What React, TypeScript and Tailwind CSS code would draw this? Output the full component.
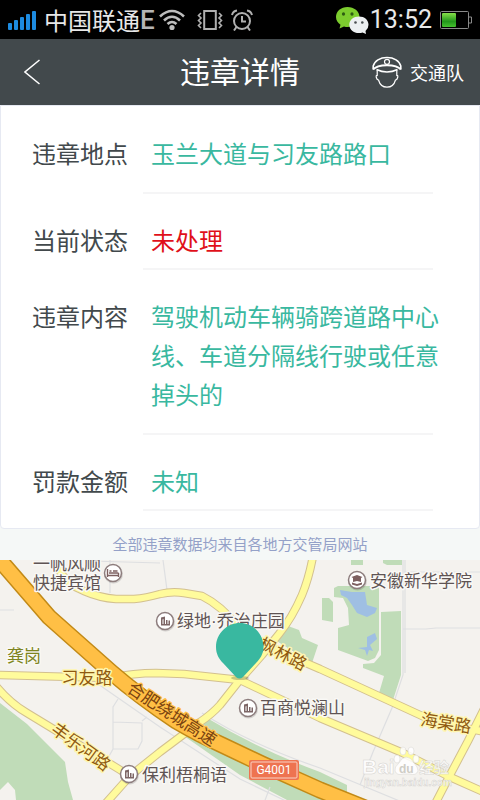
import React from 'react';

interface DetailRow {
  label: string;
  value: string;
  alert?: boolean;
  roomy?: boolean;
}

const rows: DetailRow[] = [
  { label: '违章地点', value: '玉兰大道与习友路路口', roomy: true },
  { label: '当前状态', value: '未处理', alert: true },
  { label: '违章内容', value: '驾驶机动车辆骑跨道路中心线、车道分隔线行驶或任意掉头的', roomy: true },
  { label: '罚款金额', value: '未知' },
];

// Road centre lines, drawn first as a casing and then as a fill
const roads = [
  'M58 8Q66 24 84 31Q100 38 116 39H134Q146 38 160 34Q172 31 184 33L202 36Q222 46 237 66L240 84',
  'M313 -4Q309 18 302 35Q292 58 279 74L262 95L239 121L220 145Q212 154 200 162L160 192L130 216L106 243',
  'M-4 115L110 118Q134 113 156 113L184 114L240 120L320 158L403 193L450 217L486 233',
  'M262 84L320 109L420 155Q436 163 486 172',
  'M486 145L468 181L450 215L435 244',
  'M-4 126Q10 143 27 153L55 170L130 216',
];

const lanes = [
  'M0 50H14M110 0V33M90 1L160 3M163 0L167 30',
  'M403 0V115L392 148L373 192L360 225M405 0V113M404 12H480M403 69H426L436 68H480',
  'M98 124L160 167L240 219L290 243M118 139L113 147V189L108 198M113 162L142 163V181L138 189H113M142 161L147 157',
  'M202 153Q250 184 320 208L402 242M270 227L264 243',
];

const highway = 'M-8 -10L4 5L49 57L111 112Q140 137 176 161Q200 175 222 185L262 204L320 230L375 252';

function SignalIcon() {
  return (
    <svg viewBox="0 0 29 20" className="h-5 w-[29px] shrink-0" fill="#1d8be0" aria-hidden="true">
      <rect x="0" y="13" width="4" height="7" rx="1" />
      <rect x="6" y="10" width="4" height="10" rx="1" />
      <rect x="12" y="7" width="4" height="13" rx="1" />
      <rect x="18" y="4" width="4" height="16" rx="1" />
      <rect x="24" y="1" width="4" height="19" rx="1" />
    </svg>
  );
}

function WifiIcon() {
  return (
    <svg viewBox="0 0 26 22" className="h-[22px] w-[26px] shrink-0" fill="none" stroke="#bdbdbd" strokeWidth="2.6" aria-hidden="true">
      <path d="M1 7.5Q13 -3.5 25 7.5" />
      <path d="M5 11.5Q13 4 21 11.5" />
      <path d="M8.5 15Q13 11 17.5 15" />
      <circle cx="13" cy="18.5" r="2.6" fill="#bdbdbd" stroke="none" />
    </svg>
  );
}

function VibrateIcon() {
  return (
    <svg viewBox="0 0 26 20" className="h-5 w-[26px] shrink-0" fill="none" stroke="#b0b0b0" strokeWidth="1.6" aria-hidden="true">
      <rect x="7.2" y="1" width="11.6" height="18" strokeWidth="2" />
      <path d="M4 3L1.5 5.5L4 8L1.5 10.5L4 13L1.5 15.5L4 18" />
      <path d="M22 3L24.5 5.5L22 8L24.5 10.5L22 13L24.5 15.5L22 18" />
    </svg>
  );
}

function AlarmIcon() {
  return (
    <svg viewBox="0 0 22 22" className="h-[22px] w-[22px] shrink-0" fill="none" stroke="#b0b0b0" strokeWidth="2" aria-hidden="true">
      <circle cx="11" cy="12" r="8" />
      <path d="M11 7V12.5H15" />
      <path d="M1 6Q2 2 6 1.5M16 1.5Q20 2 21 6" />
      <path d="M5.5 18L3 21.5M16.5 18L19 21.5" />
    </svg>
  );
}

function ChatIcon() {
  return (
    <svg viewBox="0 0 34 28" className="h-7 w-[34px] shrink-0" aria-hidden="true">
      <path d="M12.5 1C6 1 1 5.3 1 11C1 14.5 3 17 5.5 18.8L4.5 22.5L9 20.5Q11 21 12.5 21C19 21 24.5 17 24.5 11C24.5 5.3 19 1 12.5 1Z" fill="#7ccc2e" />
      <ellipse cx="8.5" cy="8" rx="1.6" ry="1.7" fill="#2d5c12" />
      <ellipse cx="17" cy="8" rx="1.6" ry="1.7" fill="#2d5c12" />
      <path d="M24 10.5C18.5 10.5 14.3 14 14.3 18.7C14.3 23.5 18.5 27 24 27Q26 27 27.5 26.5L31 28L30.5 25Q33.5 22.5 33.5 18.7C33.5 14 29.5 10.5 24 10.5Z" fill="#eceff1" />
      <circle cx="20.5" cy="16.5" r="1.3" fill="#4a4f52" />
      <circle cx="27.3" cy="16.5" r="1.3" fill="#4a4f52" />
    </svg>
  );
}

function BatteryIcon() {
  return (
    <svg viewBox="0 0 32 18" className="h-[18px] w-8 shrink-0" aria-hidden="true">
      <defs>
        <linearGradient id="charge" x1="0" y1="0" x2="0" y2="1">
          <stop offset="0" stopColor="#86e04a" />
          <stop offset="0.6" stopColor="#22961b" />
          <stop offset="1" stopColor="#45c22e" />
        </linearGradient>
      </defs>
      <rect x="0.5" y="0.5" width="28" height="17" rx="1" fill="none" stroke="#8a8a8a" />
      <rect x="2" y="2" width="14" height="14" rx="1" fill="url(#charge)" />
      <path d="M29 6H31.5V12H29" fill="none" stroke="#8a8a8a" />
    </svg>
  );
}

function OfficerIcon() {
  return (
    <svg viewBox="0 0 30 32" className="h-8 w-[30px] shrink-0" fill="none" stroke="#ffffff" strokeWidth="1.2" aria-hidden="true">
      <path d="M1.2 13.5V10C2.5 5 8 1.5 15 1.5S27.500 5 28.800 10V13.5" strokeWidth="1.6" />
      <path d="M1.2 13.5Q4.500 9.200 15 9.200T28.800 13.5" strokeWidth="2" />
      <path d="M4.500 13.500Q15 18.500 25.500 13.500" strokeWidth="1.4" />
      <circle cx="15" cy="5.8" r="2.5" />
      <path d="M5.2 14V19.500Q3.800 19 4.300 21.5Q5 24 6.500 24Q8.5 31.200 15 31.200T23.500 24Q25 24 25.700 21.5Q26.200 19 24.800 19.500V14" />
    </svg>
  );
}

interface PoiProps {
  x: number;
  y: number;
  kind?: 'building' | 'hotel' | 'school';
}

function Poi({ x, y, kind = 'building' }: PoiProps) {
  return (
    <g transform={`translate(${x} ${y})`}>
      <circle cx="0.5" cy="1" r="9.5" fill="#00000022" />
      <circle r="8.5" fill="#ffffff" stroke="#8d7d7d" strokeWidth="1.5" />
      {kind === 'building' && (
        <path d="M-4 4V-3.5L0 -4.5V3H1V-1H2.5V3H3.5V-0.5H5V4.5H-4ZM-2.5 3H-1.5V-2L-2.5 -1.5Z" fill="#7d6666" />
      )}
      {kind === 'hotel' && (
        <path d="M-5.5 -4V4M-5.5 2.5H5.5M5.5 4V0M-4 0H5.5M-3.5 -2H-1.5M0 -2H4.5" fill="none" stroke="#7d6060" strokeWidth="1.4" />
      )}
      {kind === 'school' && (
        <path d="M0 -5L5.5 -3L4 -2V2L0 1L-4 2V-2L-5.5 -3ZM-5 2.500L0 4L5 2.500V4.500L0 6L-5 4.500Z" fill="#7d6060" />
      )}
    </g>
  );
}

function LocationMap() {
  return (
    <svg
      viewBox="0 0 480 240"
      preserveAspectRatio="xMidYMid slice"
      role="img"
      aria-label="违章地点地图"
      className="min-h-60 w-full flex-1 bg-[#f4f2ee] font-['Liberation_Sans','Noto_Sans_CJK_SC',sans-serif] text-[17px]"
    >
      {/* Parks */}
      <g fill="#c0dcb8">
        <path d="M0 143L27 164L65 202L68 222L73 240H16L15 230L8 222L0 230Z" />
        <path d="M184 176L207 158Q260 190 320 212L347 225V240H287L240 215Z" />
        <path d="M275 80L288 66L299 70L302 78L318 85L312 103Z" />
        <path d="M351 0H363V5H351ZM383 0H402V5H387L383 3Z" />
        <path d="M322 38H329L333 42V62L322 60Z" />
        <path d="M334 28L338 26H379V90L375 98L368 101L338 90V68L349 65L348 48L343 38L334 37Z" />
        <path d="M381 52L401 51V115L393 140L379 133L384 116L363 108V104L374 103L381 95Z" />
      </g>
      <g fill="#9fbfe3">
        <path d="M340 30L352 32H365L367 45L377 48L375 53L367 57L357 53L352 45L347 38L341 35Z" />
        <path d="M367 77L375 73L377 79L370 85L373 91L369 90L367 96L365 90L358 88L367 87Z" />
      </g>

      <g fill="none" stroke="#dedfe1" strokeWidth="1.2">
        {lanes.map((d) => <path key={d} d={d} />)}
      </g>

      {/* Roads */}
      <g fill="none" strokeLinejoin="round">
        <g stroke="#d3c08f" strokeWidth="8.5">
          {roads.map((d) => <path key={d} d={d} />)}
        </g>
        <g stroke="#fffb9c" strokeWidth="6.5">
          {roads.map((d) => <path key={d} d={d} />)}
        </g>
        <path d={highway} stroke="#c28a17" strokeWidth="17" />
        <path d={highway} stroke="#ffbf45" strokeWidth="14" />
      </g>

      {/* Road names */}
      <g fill="#8f5a10" stroke="#fff6b0" strokeWidth="3" strokeLinejoin="round" paintOrder="stroke" textAnchor="middle">
        <text x="87" y="124">习友路</text>
        <text transform="translate(283 94) rotate(27)" y="6">枫林路</text>
        <text transform="translate(446 163) rotate(9)" y="6">海棠路</text>
        <text transform="translate(81 187) rotate(36)" y="6">丰乐河路</text>
        <text transform="translate(172 154) rotate(33)" y="6" fill="#7a4310" stroke="#ffbf45">合肥绕城高速</text>
      </g>

      <g stroke="#f9f8f5" strokeWidth="3" strokeLinejoin="round" paintOrder="stroke" fill="#5f5454">
        <text x="7" y="102" fill="#7d8420">龚岗</text>
        <text x="33" y="10">一帆风顺</text>
        <text x="33" y="29">快捷宾馆</text>
        <text x="177" y="67">绿地·乔治庄园</text>
        <text x="370" y="27">安徽新华学院</text>
        <text x="260" y="154">百商悦澜山</text>
        <text x="142" y="221">保利梧桐语</text>
      </g>
      <Poi x={113} y={13} kind="hotel" />
      <Poi x={165} y={61} />
      <Poi x={357} y={20} kind="school" />
      <Poi x={248} y={148} />
      <Poi x={129} y={214} />

      <rect x="249" y="200" width="50" height="20" rx="2" fill="#ee7350" />
      <rect x="251" y="202" width="46" height="16" rx="1" fill="none" stroke="#f9d2c4" />
      <text x="274" y="214" textAnchor="middle" fill="#ffffff" className="font-['Roboto',sans-serif] text-[12px]">G4001</text>

      {/* Violation marker */}
      <ellipse cx="240" cy="118" rx="9" ry="2" fill="#00000033" />
      <path d="M240 63C227 63 216 73.5 216 87C216 94 219 99 223 103L236 117Q239.5 120 243 117L256 103C260 99 263.5 94 263.5 87C263.5 73.5 253 63 240 63Z" fill="#39b8a0" />

      {/* Watermark */}
      <g fill="#ffffff" fillOpacity="0.85" stroke="#d5d3cf" strokeWidth="0.5" className="font-['Liberation_Sans','Noto_Sans_CJK_SC',sans-serif] font-bold">
        <text x="362" y="214" className="text-[21px]">Bai</text>
        <ellipse cx="397" cy="199" rx="3" ry="4" />
        <ellipse cx="403" cy="191" rx="3" ry="4" />
        <ellipse cx="411" cy="191" rx="3" ry="4" />
        <ellipse cx="416" cy="199" rx="3" ry="4" />
        <path d="M406 197Q401 198 399 203Q394 207 395 211Q397 216 403 214H410Q416 216 418 211Q418 207 414 203Q411 197 406 197Z" />
        <text x="419" y="213" className="text-[15px]">经验</text>
        <text x="364" y="226" className="text-[10px]">jingyan.baidu.com</text>
      </g>
      <text x="399" y="213" fill="#cfcdc6" className="text-[12px] font-bold">du</text>
    </svg>
  );
}

export default function App() {
  return (
    <div className="flex min-h-screen flex-col bg-[#f5f8f7] font-['Noto_Sans_CJK_SC',sans-serif]">
      {/* Status bar */}
      <div className="flex h-[39px] items-center justify-between bg-black px-2 text-[#e8e8e8]">
        <div className="flex items-center">
          <SignalIcon />
          <span className="ml-[7px] text-2xl leading-9">中国联通</span>
          <span className="mr-1 font-['Roboto',sans-serif] text-[26px] font-medium leading-9 text-[#b5b5b5]">E</span>
          <WifiIcon />
          <span className="ml-3 flex items-center gap-2">
            <VibrateIcon />
            <AlarmIcon />
          </span>
        </div>
        <div className="flex items-center">
          <ChatIcon />
          <span className="mr-2 ml-px font-['Roboto',sans-serif] text-[25px] leading-9">13:52</span>
          <BatteryIcon />
        </div>
      </div>

      {/* Title bar */}
      <header className="grid h-[66px] grid-cols-[1fr_auto_1fr] items-center bg-[#42494c] px-4 text-white">
        <button type="button" aria-label="返回" className="w-8 p-2">
          <svg viewBox="0 0 16 26" className="h-[26px] w-4" fill="none" stroke="currentColor" strokeWidth="1.5">
            <path d="M15.5 1L1 13L15.5 25" />
          </svg>
        </button>
        <h1 className="pb-1 text-3xl leading-[44px]">违章详情</h1>
        <button type="button" className="flex items-center gap-2 justify-self-end text-lg">
          <OfficerIcon />
          交通队
        </button>
      </header>

      {/* Violation details */}
      <dl className="rounded-b-sm border border-[#e6e9f2] bg-white pt-px pb-[17px] text-2xl leading-[39px]">
        {rows.map((row) => (
          <div key={row.label} className="flex pt-[26px]">
            <dt className="w-[142px] shrink-0 pl-[31px] text-[#42494c]">{row.label}</dt>
            <dd className="flex-1">
              <p className={`pr-8 pl-2 ${row.roomy ? 'pb-5' : 'pb-[9px]'} ${row.alert ? 'text-[#e0101a]' : 'text-[#39b8a0]'}`}>
                {row.value}
              </p>
              <div className="mr-[46px] h-[2px] bg-[#f5f5f6]" />
            </dd>
          </div>
        ))}
      </dl>
      <p className="pt-[3px] pb-[5px] text-center text-[15px] leading-[23px] text-[#94a1c8]">全部违章数据均来自各地方交管局网站</p>

      <LocationMap />
    </div>
  );
}
